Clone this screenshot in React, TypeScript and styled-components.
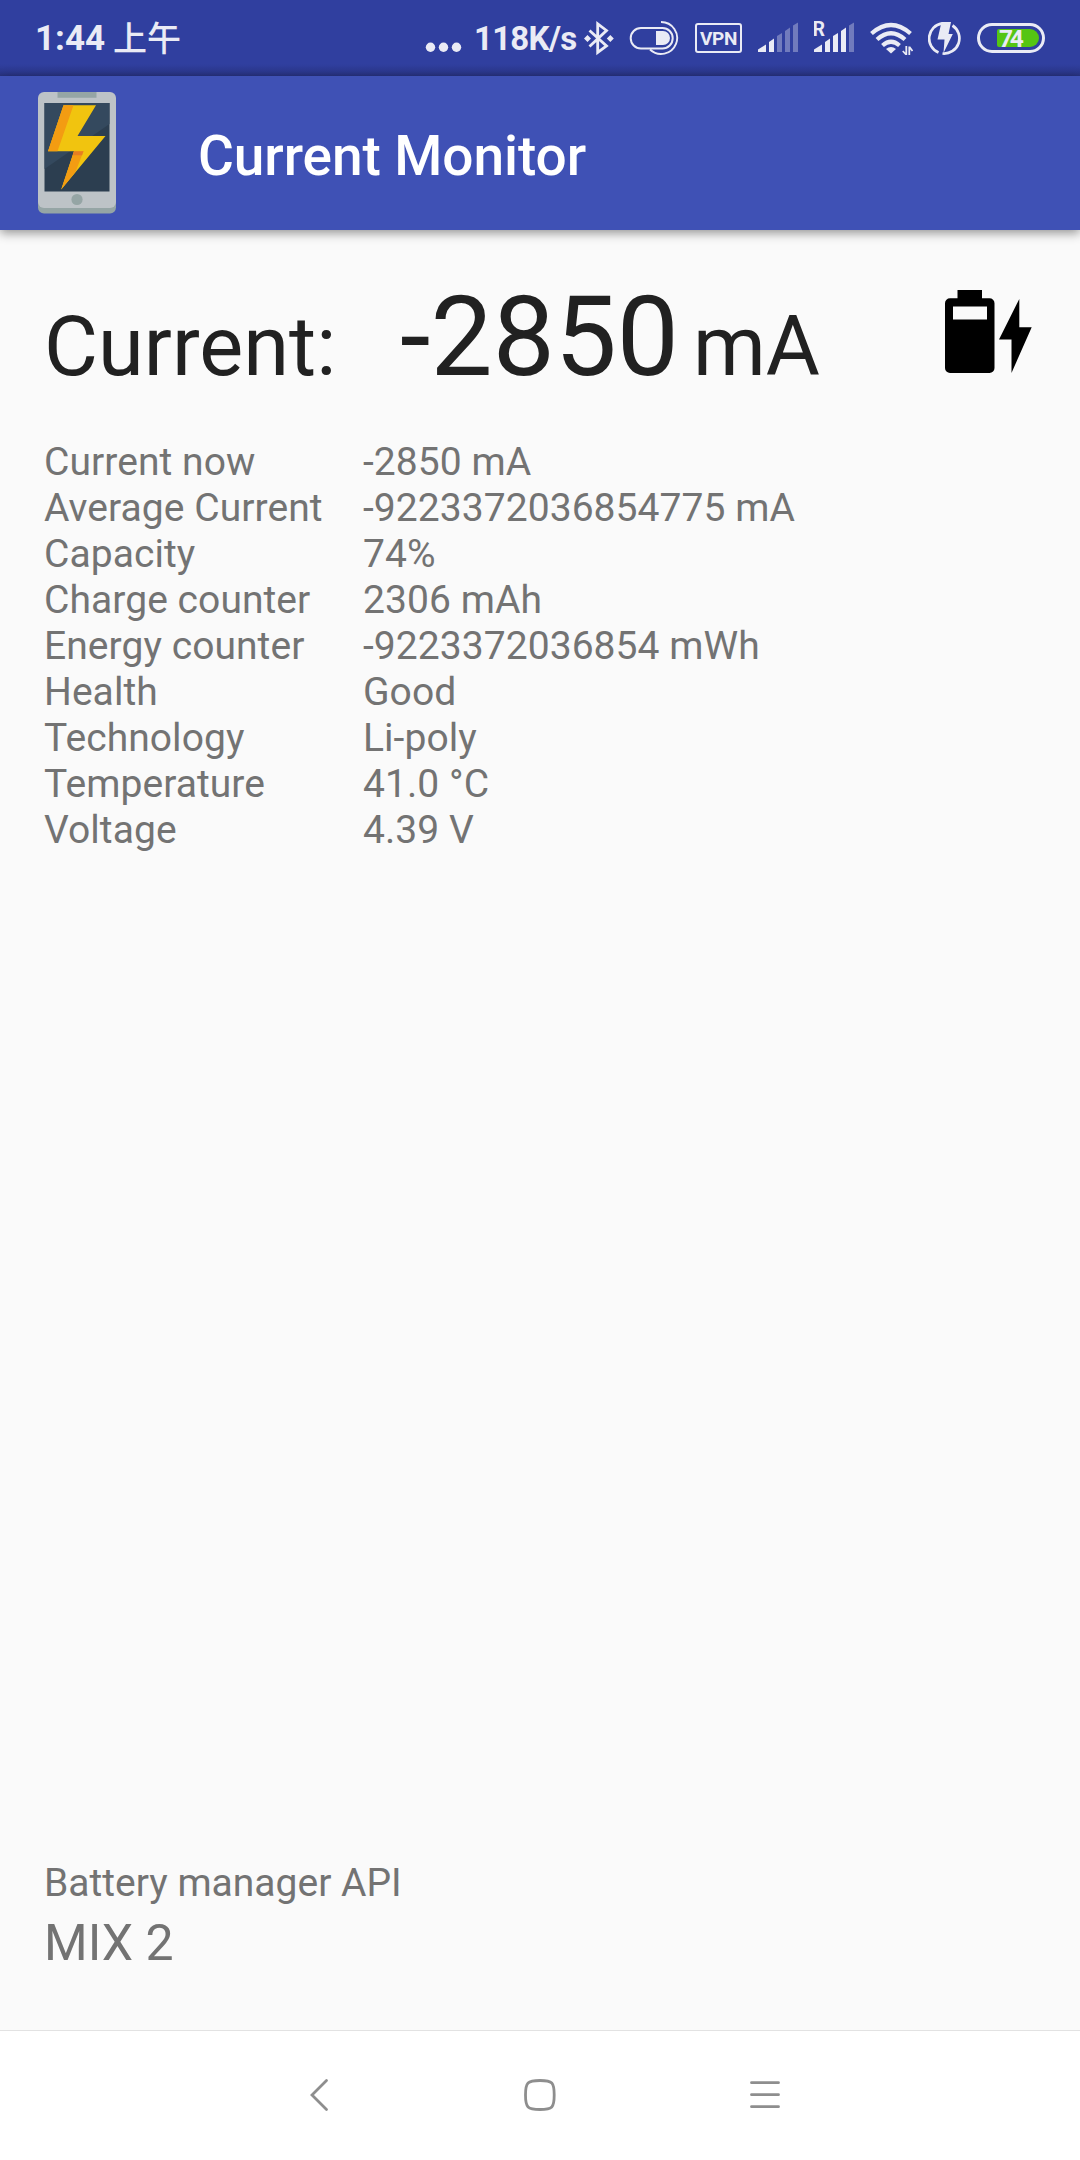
import React from "react";
import styled, { createGlobalStyle } from "styled-components";

const GlobalStyle = createGlobalStyle`
  * { box-sizing: border-box; }
  body { margin: 0; background: #fafafa; font-family: Roboto, "Noto Sans CJK SC", sans-serif; }
  svg { display: block; flex: none; }
`;

const Screen = styled.div`
  width: 1080px;
  height: 2160px;
  display: flex;
  flex-direction: column;
  overflow: hidden;
`;

const StatusBar = styled.header`
  height: 76px;
  flex: none;
  display: flex;
  justify-content: space-between;
  padding: 0 35px;
  background: linear-gradient(#303f9f 0 64px, #2c3990 71px, #283381 76px);
  color: #eaebf5;
`;

const Clock = styled.div`
  display: flex;
  gap: 8px;
  font-size: 35px;
  font-weight: 700;
  line-height: 78px;
  white-space: pre;
`;

const Meridiem = styled.span`
  font-family: "Noto Sans CJK SC", sans-serif;
  font-weight: 500;
  font-size: 34px;
  line-height: 74px;
`;

const StatusIcons = styled.div`
  display: flex;
`;

const Slot = styled.div<{ $gap: number }>`
  margin-left: ${(p) => p.$gap}px;
`;

const Speed = styled.div`
  width: 101px;
  margin-left: 12px;
  font-size: 33px;
  font-weight: 700;
  line-height: 77px;
  letter-spacing: -0.75px;
  white-space: nowrap;
`;

const VpnBadge = styled.div`
  width: 47px;
  height: 30px;
  margin: 23px 0 0 16px;
  border: 2px solid #eaebf5;
  border-radius: 3px;
  font-size: 19px;
  font-weight: 700;
  line-height: 27px;
  letter-spacing: -0.3px;
  text-align: center;
`;

const BatteryPill = styled.div`
  width: 68px;
  height: 30px;
  margin: 23px 0 0 15px;
  padding: 3px 3px 3px 17px;
  border: 3px solid #eaebf5;
  border-radius: 15px;
`;

const BatteryLevel = styled.div`
  width: 42px;
  height: 18px;
  padding-left: 2px;
  border-radius: 2px 9px 9px 2px;
  background: #55c513;
  font-size: 24.5px;
  font-weight: 700;
  line-height: 19px;
  letter-spacing: -3.4px;
`;

const AppBar = styled.div`
  position: relative;
  height: 154px;
  flex: none;
  display: flex;
  align-items: center;
  gap: 82px;
  padding-left: 38px;
  background: #3f51b5;
  box-shadow: 0 3px 10px rgba(0, 0, 0, 0.42);
`;

const Title = styled.h1`
  margin: 5px 0 0;
  color: #fff;
  font-size: 55px;
  font-weight: 500;
  line-height: 64px;
  letter-spacing: -0.08px;
`;

const Content = styled.main`
  flex: 1;
  display: flex;
  flex-direction: column;
  padding: 43px 44px 58px;
  color: #737373;
  font-size: 39px;
`;

const Reading = styled.section`
  display: flex;
  align-items: baseline;
  height: 166px;
  color: #212121;
  font-size: 83px;
  line-height: 129px;
  white-space: nowrap;
`;

const ReadingLabel = styled.div`
  width: 356px;
`;

const ReadingValue = styled.div`
  width: 293px;
  font-size: 110.5px;
`;

const ReadingIcon = styled.div`
  align-self: flex-start;
  margin: 17px 4px 0 auto;
`;

const Details = styled.dl`
  margin: 0;
  display: grid;
  grid-template-columns: 319px 1fr;
  grid-auto-rows: 46px;
  line-height: 46px;
  letter-spacing: 0.06px;
`;

const Cell = styled.dd`
  margin: 0;
  white-space: nowrap;
`;

const Footer = styled.footer`
  margin-top: auto;
  line-height: 46px;
`;

const Device = styled.div`
  margin-top: 8px;
  font-size: 50px;
  line-height: 58px;
`;

const NavBar = styled.nav`
  height: 130px;
  flex: none;
  display: flex;
  padding: 43px 0 0 306px;
  border-top: 1px solid #e2e2e2;
  background: #fff;
`;

const rows: [string, string][] = [
  ["Current now", "-2850 mA"],
  ["Average Current", "-9223372036854775 mA"],
  ["Capacity", "74%"],
  ["Charge counter", "2306 mAh"],
  ["Energy counter", "-9223372036854 mWh"],
  ["Health", "Good"],
  ["Technology", "Li-poly"],
  ["Temperature", "41.0 °C"],
  ["Voltage", "4.39 V"],
];

const ink = "#eaebf5";

const Dots = () => (
  <svg width="37" height="76" viewBox="0 0 37 76" fill={ink}>
    <circle cx="5.5" cy="47.3" r="4.7" />
    <circle cx="18.5" cy="47.3" r="4.7" />
    <circle cx="31.5" cy="47.3" r="4.7" />
  </svg>
);

const Bluetooth = () => (
  <svg width="30" height="76" viewBox="0 0 30 76" fill="none" stroke={ink} strokeWidth="2.8">
    <path d="M5.500 30.500 22.500 46 13.700 52.500V23.800L22.500 30.500 5.500 46.500" />
    <path d="M3.500 35 7 38.500 3.500 42 0 38.500zM26.300 35l3.500 3.500-3.500 3.500-3.500-3.500z" fill={ink} stroke="none" />
  </svg>
);

const Toggle = () => (
  <svg width="50" height="76" viewBox="0 0 50 76" fill="none" stroke={ink} strokeWidth="2">
    <rect x="1.7" y="28" width="42" height="20.5" rx="10.2" />
    <path d="M27 31h7a7 7 0 0 1 0 14h-7z" fill={ink} stroke="none" />
    <path d="M32 22A16 16 0 1 1 21 49.500" strokeWidth="1.9" />
  </svg>
);

const Signal = ({ level, roaming }: { level: number; roaming?: boolean }) => (
  <svg width="41" height="76" viewBox="0 0 41 76" fill={ink}>
    <path d="M0 52v-2.500L8 44.500V52z" />
    {["M11 52V42l5-3.500V52z", "M19 52V36l5-3V52z", "M27 52V31l5-3.500V52z", "M35 52V25.500l5-3V52z"].map((d, i) => (
      <path key={d} d={d} opacity={i + 2 > level ? 0.35 : 1} />
    ))}
    {roaming && (
      <text x="-1.5" y="36" fontFamily="Roboto, sans-serif" fontWeight="700" fontSize="19.5">
        R
      </text>
    )}
  </svg>
);

const Wifi = () => (
  <svg width="43" height="76" viewBox="0 0 43 76" fill="none" stroke={ink} strokeWidth="4.2">
    <path d="M1.500 33.500Q21 16.500 40.500 33.500M7 39.500Q21 27 35 39.500M12.500 45.500Q21 38 29.500 45.500" />
    <path d="M16 49q5-4 10 0l-5 4.500z" fill={ink} stroke="none" />
    <path d="M36.300 46v9M32.800 51l3.200 3.500M39.300 55v-8.500M39.500 47l3 4" strokeWidth="1.8" />
  </svg>
);

const Charging = () => (
  <svg width="34" height="76" viewBox="0 0 34 76" fill="none" stroke={ink} strokeWidth="2.700">
    <path d="M14 23.300A15.300 15.300 0 0 0 10.500 52.500M24.500 25.500A15.300 15.300 0 0 1 14.500 53.500" />
    <path d="M13.500 22h9.500L20.500 34h4.300L15.500 53l1-13.500H9.500z" fill={ink} stroke="none" />
  </svg>
);

const PhoneLogo = () => (
  <svg width="78" height="122" viewBox="0 0 78 122">
    <path d="M0 110h78v5.500a6 6 0 0 1-6 6H6a6 6 0 0 1-6-6z" fill="#95a5a5" />
    <rect width="78" height="116" rx="6" fill="#bdc3c7" />
    <path d="M19.500 0h39v5.700h-39z" fill="#95a5a5" />
    <path d="M6.500 11h65v88.500h-65z" fill="#2c3e50" />
    <path d="M6.500 11h65v21L6.500 77z" fill="#34495e" />
    <path d="M25.500 13.200H58L39.500 44H67.500L23.200 97.500 36 59.200H10z" fill="#f1c40f" />
    <path d="M25.500 13.200h10L19.500 59.200H10zM36 59.200h9.500L37.500 80 23.200 97.500z" fill="#f39c12" />
    <path d="M36 59.200h9.500l-1.500 4H34.700z" fill="#e67e22" />
    <circle cx="39" cy="107.500" r="5.600" fill="#95a5a5" />
  </svg>
);

const BatteryCharging = () => (
  <svg width="87" height="84" viewBox="0 0 87 84">
    <path
      fillRule="evenodd"
      d="M12.500 0h24.500v8.300h7.500a5 5 0 0 1 5 5V78a5 5 0 0 1-5 5H5a5 5 0 0 1-5-5V13.300a5 5 0 0 1 5-5h7.500zM8 16.500v13h34v-13z"
    />
    <path d="M74.300 9v28.300h12.400L66.500 83V49.500H54z" />
  </svg>
);

const NavIcons = () => (
  <svg width="480" height="40" viewBox="0 0 480 40" fill="none" stroke="#8e8e8e" strokeWidth="2.800" strokeLinecap="round">
    <path d="M20.500 6.500 6 21 20.500 35.500" />
    <path d="M234 6.500C246.500 6.500 248.200 8.500 248.200 21S246.500 35.500 234 35.500 219.500 33.500 219.500 21 221.500 6.500 234 6.500z" />
    <path d="M445.500 8.700h27M445.500 20.700h27M445.500 32.700h27" />
  </svg>
);

export default function App() {
  return (
    <Screen>
      <GlobalStyle />
      <StatusBar>
        <Clock>
          1:44<Meridiem>上午</Meridiem>
        </Clock>
        <StatusIcons>
          <Dots />
          <Speed>118K/s</Speed>
          <Slot $gap={9}><Bluetooth /></Slot>
          <Slot $gap={15}><Toggle /></Slot>
          <VpnBadge>VPN</VpnBadge>
          <Slot $gap={16}><Signal level={2} /></Slot>
          <Slot $gap={15}><Signal level={4} roaming /></Slot>
          <Slot $gap={15}><Wifi /></Slot>
          <Slot $gap={15}><Charging /></Slot>
          <BatteryPill>
            <BatteryLevel>74</BatteryLevel>
          </BatteryPill>
        </StatusIcons>
      </StatusBar>
      <AppBar>
        <PhoneLogo />
        <Title>Current Monitor</Title>
      </AppBar>
      <Content>
        <Reading>
          <ReadingLabel>Current:</ReadingLabel>
          <ReadingValue>-2850</ReadingValue>
          <div>mA</div>
          <ReadingIcon><BatteryCharging /></ReadingIcon>
        </Reading>
        <Details>
          {rows.map(([label, value]) => (
            <React.Fragment key={label}>
              <Cell as="dt">{label}</Cell>
              <Cell>{value}</Cell>
            </React.Fragment>
          ))}
        </Details>
        <Footer>
          <div>Battery manager API</div>
          <Device>MIX 2</Device>
        </Footer>
      </Content>
      <NavBar>
        <NavIcons />
      </NavBar>
    </Screen>
  );
}
